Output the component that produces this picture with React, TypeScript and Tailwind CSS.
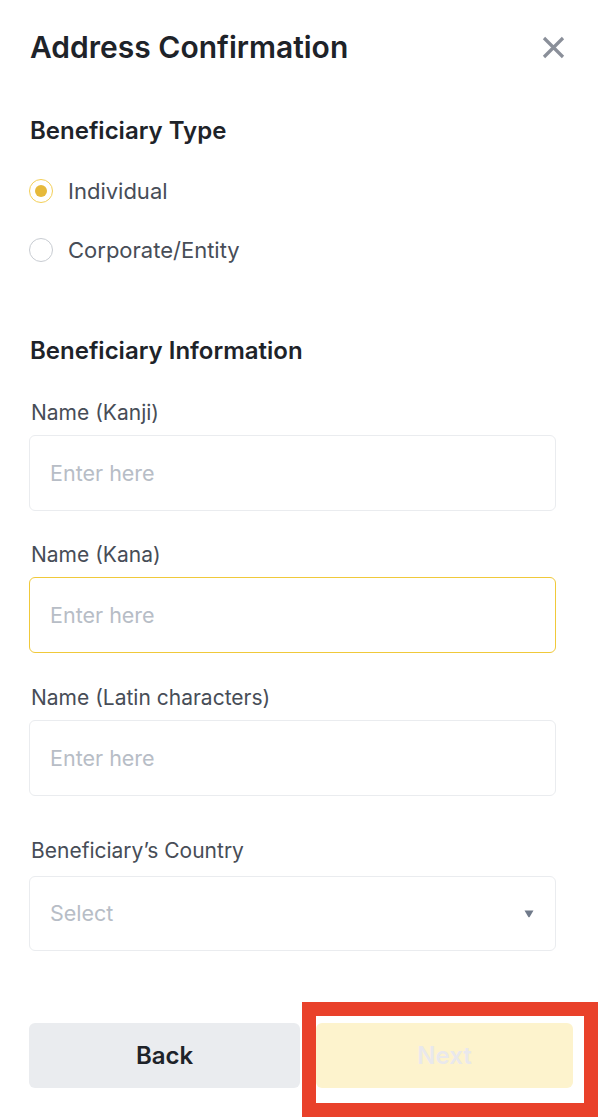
import React, { useState } from 'react';

const FONT = "font-['Inter','Noto_Sans',sans-serif]";

type FieldProps = {
  label: string;
  focused?: boolean;
  labelTop: string;
  inputTop: string;
};

const Field: React.FC<FieldProps> = ({ label, focused, labelTop, inputTop }) => (
  <div className={labelTop}>
    <div className="pl-[2px] text-[21px] leading-[24px] text-[#474d57]">{label}</div>
    <div
      className={
        'flex h-[76px] w-[527px] items-center rounded-[6px] border pl-[20px] ' +
        inputTop +
        ' ' +
        (focused ? 'border-[#f0c93a]' : 'border-[#eaecef]')
      }
    >
      <input
        placeholder="Enter here"
        className="w-full bg-transparent text-[21.5px] text-[#1e2329] outline-none placeholder:text-[#b7bdc6]"
      />
    </div>
  </div>
);

export default function App() {
  const [type, setType] = useState<'individual' | 'corporate'>('individual');

  return (
    <div className={`relative h-[1120px] w-[598px] overflow-hidden bg-white ${FONT}`}>
      <div className="pl-[29px]">
        {/* header */}
        <div className="flex items-center justify-between pr-[33px] pt-[29px]">
          <h1 className="pl-[1px] text-[30px] font-semibold leading-[36px] text-[#1e2329]">
            Address Confirmation
          </h1>
          <button className="text-[#8a8f99]">
            <svg width="23" height="23" viewBox="0 0 23 23" fill="none">
              <path d="M2 2L21 21M21 2L2 21" stroke="currentColor" strokeWidth="3.2" />
            </svg>
          </button>
        </div>

        <h2 className="mt-[51px] pl-[1px] text-[24px] font-semibold leading-[30px] text-[#1e2329]">
          Beneficiary Type
        </h2>

        <div className="mt-[33px] flex flex-col gap-[35px]">
          {[
            { id: 'individual', label: 'Individual' },
            { id: 'corporate', label: 'Corporate/Entity' },
          ].map((o) => {
            const active = type === o.id;
            return (
              <button
                key={o.id}
                onClick={() => setType(o.id as 'individual' | 'corporate')}
                className="flex h-[24px] items-center gap-[15px] text-left"
              >
                <span
                  className={
                    'flex h-[24px] w-[24px] items-center justify-center rounded-full border-[1.5px] ' +
                    (active ? 'border-[#f3cf57]' : 'border-[#c8ccd2]')
                  }
                >
                  {active && <span className="h-[12px] w-[12px] rounded-full bg-[#e6b93a]" />}
                </span>
                <span className="text-[22px] leading-[24px] text-[#474d57]">{o.label}</span>
              </button>
            );
          })}
        </div>

        <h2 className="mt-[74px] pl-[1px] text-[24px] font-semibold leading-[30px] text-[#1e2329]">
          Beneficiary Information
        </h2>

        <Field label="Name (Kanji)" labelTop="mt-[35px]" inputTop="mt-[10px]" />
        <Field label="Name (Kana)" labelTop="mt-[32px]" inputTop="mt-[10px]" focused />
        <Field label="Name (Latin characters)" labelTop="mt-[33px]" inputTop="mt-[10px]" />

        <div className="mt-[43px]">
          <div className="pl-[2px] text-[21px] leading-[24px] text-[#474d57]">Beneficiary’s Country</div>
          <div className="mt-[13px] flex h-[75px] w-[527px] items-center justify-between rounded-[6px] border border-[#eaecef] pl-[20px] pr-[21px]">
            <span className="text-[21.5px] text-[#b7bdc6]">Select</span>
            <svg width="10" height="8" viewBox="0 0 10 8">
              <path d="M0.5 0.5H9.5L5.8 6.8Q5 7.8 4.2 6.8Z" fill="#707a8a" />
            </svg>
          </div>
        </div>

        <div className="mt-[72px] flex gap-[16px]">
          <button className="h-[65px] w-[271px] rounded-[6px] bg-[#eaecef] text-[24px] font-semibold text-[#1e2329]">
            Back
          </button>
          <button
            disabled
            className="h-[65px] w-[257px] rounded-[6px] bg-[#fdf3cd] text-[24px] font-semibold text-[#e9e8ec]"
          >
            Next
          </button>
        </div>
      </div>

      {/* annotation highlight */}
      <div className="pointer-events-none absolute left-[302px] top-[1002px] h-[115px] w-[296px] border-[14px] border-[#e9412a]" />
    </div>
  );
}
